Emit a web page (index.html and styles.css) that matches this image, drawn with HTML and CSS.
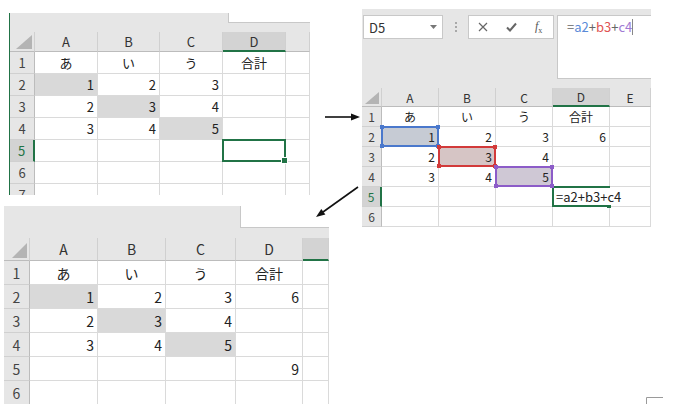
FILE: index.html
```html
<!DOCTYPE html>
<html lang="ja">
<head>
    <meta charset="UTF-8">
    <title>Excel formula steps</title>
    <link rel="stylesheet" href="styles.css">
</head>
<body>
<div class="desk">

    <!-- step 1: plain sheet, D5 selected -->
    <section class="win win1">
        <div class="band"><div class="tab"></div></div>
        <div class="grid g1">
            <div class="hd corner"><svg width="16" height="14"><polygon points="16,0 16,14 0,14" fill="#b4b4b4"/></svg></div>
            <div class="hd">A</div><div class="hd">B</div><div class="hd">C</div><div class="hd on">D</div><div class="hd"></div>

            <div class="rh">1</div><div class="t">あ</div><div class="t">い</div><div class="t">う</div><div class="t">合計</div><div></div>
            <div class="rh">2</div><div class="n sh">1</div><div class="n">2</div><div class="n">3</div><div></div><div></div>
            <div class="rh">3</div><div class="n">2</div><div class="n sh">3</div><div class="n">4</div><div></div><div></div>
            <div class="rh">4</div><div class="n">3</div><div class="n">4</div><div class="n sh">5</div><div></div><div></div>
            <div class="rh on">5</div><div></div><div></div><div></div><div class="cur"></div><div></div>
            <div class="rh">6</div><div></div><div></div><div></div><div></div><div></div>
            <div class="rh">7</div><div></div><div></div><div></div><div></div><div></div>
        </div>
    </section>

    <!-- step 2: typing the formula -->
    <section class="win win2">
        <div class="bar">
            <div class="namebox"><span>D5</span><svg width="7" height="4"><polygon points="0,0 7,0 3.5,4" fill="#777"/></svg></div>
            <div class="grip"><i></i><i></i><i></i></div>
            <div class="btns">
                <svg width="10" height="10"><path d="M1 1 L9 9 M9 1 L1 9" stroke="#666" stroke-width="1.2"/></svg>
                <svg width="11" height="10"><path d="M1 5.5 L4 8.5 L10 1.5" stroke="#666" stroke-width="2" fill="none"/></svg>
                <span class="fx"><i>f</i><sub>x</sub></span>
            </div>
            <div class="formula">=<b class="c-a">a2</b>+<b class="c-b">b3</b>+<b class="c-c">c4</b><span class="caret"></span></div>
        </div>
        <div class="grid g2">
            <div class="hd corner"><svg width="14" height="12"><polygon points="14,0 14,12 0,12" fill="#b4b4b4"/></svg></div>
            <div class="hd">A</div><div class="hd">B</div><div class="hd">C</div><div class="hd on">D</div><div class="hd">E</div>

            <div class="rh">1</div><div class="t">あ</div><div class="t">い</div><div class="t">う</div><div class="t">合計</div><div></div>
            <div class="rh">2</div><div class="n ref ref-a">1</div><div class="n">2</div><div class="n">3</div><div class="n">6</div><div></div>
            <div class="rh">3</div><div class="n">2</div><div class="n ref ref-b">3</div><div class="n">4</div><div></div><div></div>
            <div class="rh">4</div><div class="n">3</div><div class="n">4</div><div class="n ref ref-c">5</div><div></div><div></div>
            <div class="rh on">5</div><div></div><div></div><div></div><div class="edit"><span>=a2+b3+c4</span></div><div></div>
            <div class="rh">6</div><div></div><div></div><div></div><div></div><div></div>
        </div>
    </section>

    <!-- step 3: result -->
    <section class="win win3">
        <div class="band"><div class="tab"></div></div>
        <div class="grid g3">
            <div class="hd corner"><svg width="15" height="15"><polygon points="15,0 15,15 0,15" fill="#b4b4b4"/></svg></div>
            <div class="hd">A</div><div class="hd">B</div><div class="hd">C</div><div class="hd">D</div><div class="hd on"></div>

            <div class="rh">1</div><div class="t">あ</div><div class="t">い</div><div class="t">う</div><div class="t">合計</div><div></div>
            <div class="rh">2</div><div class="n sh">1</div><div class="n">2</div><div class="n">3</div><div class="n">6</div><div></div>
            <div class="rh">3</div><div class="n">2</div><div class="n sh">3</div><div class="n">4</div><div></div><div></div>
            <div class="rh">4</div><div class="n">3</div><div class="n">4</div><div class="n sh">5</div><div></div><div></div>
            <div class="rh">5</div><div></div><div></div><div></div><div class="n">9</div><div></div>
            <div class="rh">6</div><div></div><div></div><div></div><div></div><div></div>
        </div>
    </section>

    <svg class="arrows" width="682" height="404">
        <line x1="325" y1="117" x2="352" y2="117" stroke="#111" stroke-width="1.6"/>
        <polygon points="360,117 351,113.5 351,120.5" fill="#111"/>
        <line x1="358" y1="187" x2="323" y2="212" stroke="#111" stroke-width="1.6"/>
        <polygon points="316,217 325.4,214.6 321.3,208.9" fill="#111"/>
        <path d="M646.5 404 V397.5 H663" stroke="#9a9a9a" fill="none"/>
    </svg>
</div>
</body>
</html>
```

FILE: styles.css
```css
/* three excel captures laid on a white page */
* {
    box-sizing: border-box;
}

body {
    margin: 0;
    background: #fff;
    font-family: "Noto Sans CJK JP", "Noto Sans", sans-serif;
    color: #222;
}

.desk {
    position: relative;
    width: 682px;
    height: 404px;
    overflow: hidden;
}

.win {
    position: absolute;
    overflow: hidden;
    background: #fff;
}

.win1 {
    left: 9px;
    top: 13px;
    width: 301px;
    height: 182px;
    border-left: 1px solid #217346;
    font-size: 13px;
}

.win2 {
    left: 362px;
    top: 9px;
    width: 289px;
    height: 218px;
    font-size: 12px;
}

.win3 {
    left: 4px;
    top: 206px;
    width: 325px;
    height: 198px;
    font-size: 14px;
}

/* grey strip above the grid */
.band {
    background: #e6e6e6;
    display: flex;
    justify-content: flex-end;
}

.tab {
    background: #fff;
    border-left: 1px solid #c8c8c8;
    border-bottom: 1px solid #c8c8c8;
}

.win1 .band { height: 19px; }
.win1 .tab { width: 82px; height: 10px; }
.win3 .band { height: 32px; }
.win3 .tab { width: 89px; height: 22px; }

/* formula bar */
.bar {
    height: 79px;
    background: #e6e6e6;
    display: flex;
    align-items: flex-start;
    padding: 6px 0 0 1px;
}

.namebox {
    width: 80px;
    height: 24px;
    background: #fff;
    border: 1px solid #c8c8c8;
    display: flex;
    align-items: center;
    justify-content: space-between;
    padding: 0 5px 0 5px;
    font-size: 13px;
    color: #333;
}

.grip {
    width: 25px;
    height: 24px;
    display: flex;
    flex-direction: column;
    align-items: center;
    justify-content: center;
    gap: 2px;
}

.grip i {
    width: 2px;
    height: 2px;
    background: #a8a8a8;
}

.btns {
    width: 86px;
    height: 24px;
    background: #fff;
    border: 1px solid #c8c8c8;
    display: flex;
    align-items: center;
    gap: 18px;
    padding-left: 9px;
}

.fx {
    font-family: "Liberation Serif", serif;
    font-size: 12px;
    color: #555;
}

.fx sub {
    font-size: 8px;
}

.formula {
    margin-left: 3px;
    flex: 1;
    height: 64px;
    background: #fff;
    border: 1px solid #c8c8c8;
    border-right: none;
    padding: 2px 9px;
    font-size: 13px;
    line-height: 18px;
    color: #666;
}

.formula b { font-weight: normal; }
.c-a { color: #5a8ad8; }
.c-b { color: #e05454; }
.c-c { color: #a07ad4; }

.caret {
    display: inline-block;
    width: 1px;
    height: 16px;
    background: #888;
    vertical-align: -3px;
}

/* grids */
.grid {
    display: grid;
}

.g1 {
    grid-template-columns: 25px 63px 62px 63px 63px 1fr;
    grid-template-rows: 20px;
    grid-auto-rows: 22px;
}

.g2 {
    grid-template-columns: 20px 57px 57px 57px 57px 1fr;
    grid-template-rows: 19px;
    grid-auto-rows: 20px;
}

.g3 {
    grid-template-columns: 26px 68px 68px 70px 67px 1fr;
    grid-template-rows: 23px;
    grid-auto-rows: 24px;
}

.grid > div {
    display: flex;
    align-items: center;
    padding: 0 3px;
    white-space: nowrap;
    border-right: 1px solid #dadada;
    border-bottom: 1px solid #dadada;
}

.grid > .hd {
    background: #e6e6e6;
    justify-content: center;
    color: #333;
    border-right-color: #d0d0d0;
    border-bottom-color: #bcbcbc;
}

.grid > .rh {
    background: #e6e6e6;
    justify-content: center;
    color: #444;
    padding: 0;
    border-right-color: #bcbcbc;
    border-bottom-color: #d0d0d0;
}

.grid > .hd.on {
    background: #d3d3d3;
    border-bottom: 2px solid #217346;
}

.grid > .rh.on {
    background: #d3d3d3;
    color: #217346;
    border-right: 2px solid #217346;
}

.grid > .corner {
    justify-content: flex-end;
    align-items: flex-end;
    padding: 0 2px 2px 0;
}

.grid > .t { justify-content: center; }
.grid > .n { justify-content: flex-end; }
.grid > .sh { background: #d9d9d9; }

/* selected cell with fill handle */
.grid > .cur,
.grid > .edit,
.grid > .ref {
    position: relative;
}

.cur::after {
    content: "";
    position: absolute;
    inset: -1px -1px -1px -1px;
    border: 2px solid #217346;
}

.cur::before {
    content: "";
    position: absolute;
    right: -3px;
    bottom: -3px;
    width: 5px;
    height: 5px;
    background: #217346;
    border: 1px solid #fff;
    z-index: 2;
}

.grid > .edit {
    overflow: visible;
    border-right-color: transparent;
    z-index: 1;
    font-size: 13px;
    color: #222;
    padding-left: 3px;
}

.edit span {
    position: relative;
    z-index: 3;
}

.edit::before {
    content: "";
    position: absolute;
    right: -2px;
    bottom: -2px;
    width: 4px;
    height: 3px;
    background: #217346;
    z-index: 2;
}

.edit::after {
    content: "";
    position: absolute;
    inset: -1px -1px -1px -1px;
    border: 2px solid #217346;
    border-right: none;
}

/* coloured formula references */
.ref::after {
    content: "";
    position: absolute;
    inset: -1px -1px -1px -1px;
    border: 2px solid var(--rc);
}

.ref::before {
    content: "";
    position: absolute;
    left: -2px;
    top: -2px;
    width: 4px;
    height: 4px;
    background: var(--rc);
    box-shadow: 56px 0 0 var(--rc), 0 19px 0 var(--rc), 56px 19px 0 var(--rc);
    z-index: 2;
}

.grid > .ref-a { background: #c6cbd4; --rc: #4a78cc; }
.grid > .ref-b { background: #d6c5c5; --rc: #d23a3a; }
.grid > .ref-c { background: #cfc8d5; --rc: #8c5cc8; }

.arrows {
    position: absolute;
    left: 0;
    top: 0;
    pointer-events: none;
}
```
